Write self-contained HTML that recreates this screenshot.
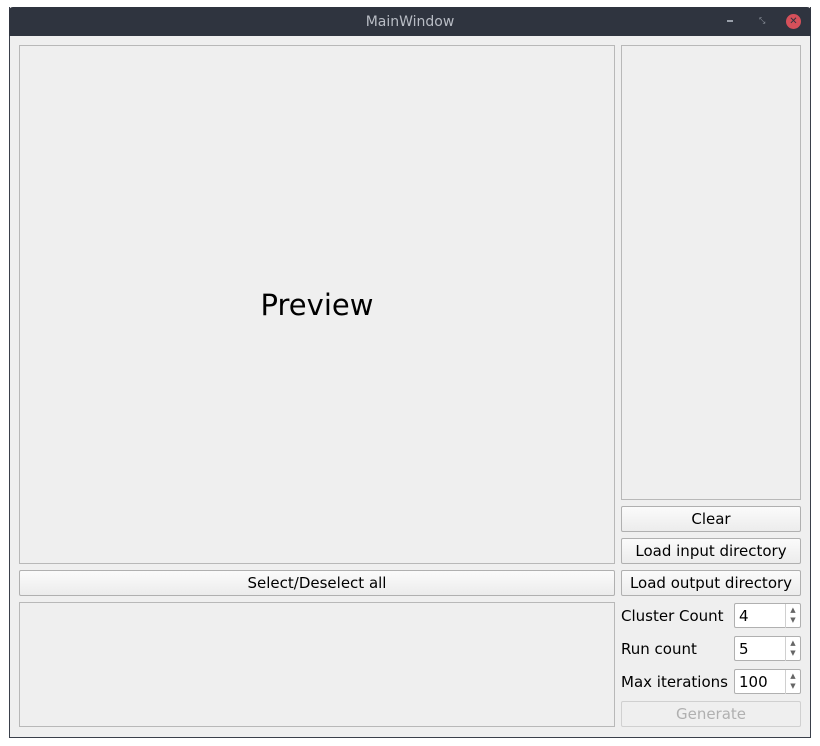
<!DOCTYPE html>
<html><head><style>
body{margin:0;width:820px;height:746px;background:#fff;position:relative;font-family:"DejaVu Sans","Liberation Sans",sans-serif;font-size:15px;color:#000;overflow:hidden}
.a{position:absolute;box-sizing:border-box}
.win{left:9px;top:7px;width:802px;height:731px;background:#efefef;border:1px solid #3a3f4a;border-top:none}
.title{left:9px;top:7px;width:802px;height:29px;background:#2f343f;border-radius:4px 4px 0 0;color:#b8bcc4;font-size:14px;text-align:center;line-height:31px}
.frame{border:1px solid #b8b8b8;background:#efefef}
.btn{border:1px solid #b0b0b0;border-radius:2px;background:linear-gradient(#fbfbfb,#ececec);text-align:center;line-height:25px}
.lbl{line-height:26px}
.spin{border:1px solid #b0b0b0;background:#fff;border-radius:2px;padding-left:4px;line-height:24px}
.spin .ar{position:absolute;right:0;top:0;width:14px;height:23px;border-left:1px solid #d0d0d0;font-size:7px;color:#666;text-align:center;line-height:10px;padding-top:1px}
</style></head><body>
<div class="a win"></div>
<div class="a title">MainWindow</div>
<div class="a" style="left:727px;top:20px;width:6px;height:2px;background:#9aa0aa"></div>
<div class="a" style="left:759px;top:18px;width:6px;height:6px;color:#9aa0aa;font-size:8px;line-height:6px">⤡</div>
<div class="a" style="left:786px;top:14px;width:15px;height:15px;border-radius:50%;background:#d5505a;color:#2f343f;font-size:10px;font-weight:bold;text-align:center;line-height:15px">✕</div>
<div class="a frame" style="left:19px;top:45px;width:596px;height:519px"></div>
<div class="a" style="left:19px;top:288px;width:596px;text-align:center;font-size:29px">Preview</div>
<div class="a frame" style="left:621px;top:45px;width:180px;height:455px"></div>
<div class="a btn" style="left:621px;top:506px;width:180px;height:26px">Clear</div>
<div class="a btn" style="left:621px;top:538px;width:180px;height:26px">Load input directory</div>
<div class="a btn" style="left:19px;top:570px;width:596px;height:26px">Select/Deselect all</div>
<div class="a btn" style="left:621px;top:570px;width:180px;height:26px">Load output directory</div>
<div class="a frame" style="left:19px;top:602px;width:596px;height:125px"></div>
<div class="a lbl" style="left:621px;top:603px">Cluster Count</div>
<div class="a lbl" style="left:621px;top:636px">Run count</div>
<div class="a lbl" style="left:621px;top:669px">Max iterations</div>
<div class="a spin" style="left:734px;top:603px;width:67px;height:25px">4<div class="ar">▲<br>▼</div></div>
<div class="a spin" style="left:734px;top:636px;width:67px;height:25px">5<div class="ar">▲<br>▼</div></div>
<div class="a spin" style="left:734px;top:669px;width:67px;height:25px">100<div class="ar">▲<br>▼</div></div>
<div class="a btn" style="left:621px;top:701px;width:180px;height:26px;color:#b0b0b0;border-color:#d0d0d0;background:#efefef">Generate</div>
</body></html>
